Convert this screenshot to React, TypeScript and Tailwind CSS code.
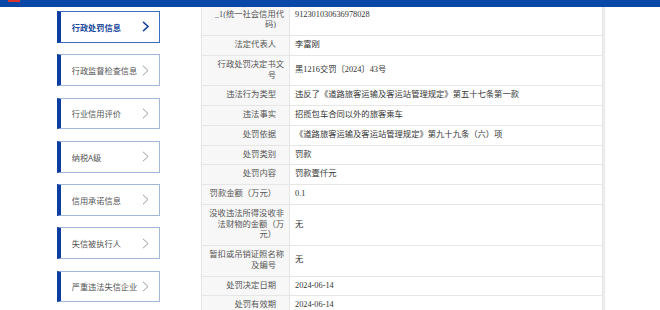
import { useState } from 'react';

/** Side menu entries */
const MENU = [
  '行政处罚信息',
  '行政监督检查信息',
  '行业信用评价',
  '纳税A级',
  '信用承诺信息',
  '失信被执行人',
  '严重违法失信企业',
];

/** Penalty detail rows: label lines (already wrapped) and value */
const ROWS: [string[], string][] = [
  [['行政相对人代码', '_1(统一社会信用代', '码)'], '912301030636978028'],
  [['法定代表人'], '李富刚'],
  [['行政处罚决定书文', '号'], '黑1216交罚〔2024〕43号'],
  [['违法行为类型'], '违反了《道路旅客运输及客运站管理规定》第五十七条第一款'],
  [['违法事实'], '招揽包车合同以外的旅客乘车'],
  [['处罚依据'], '《道路旅客运输及客运站管理规定》第九十九条（六）项'],
  [['处罚类别'], '罚款'],
  [['处罚内容'], '罚款壹仟元'],
  [['罚款金额（万元）'], '0.1'],
  [['没收违法所得没收非', '法财物的金额（万', '元）'], '无'],
  [['暂扣或吊销证照名称', '及编号'], '无'],
  [['处罚决定日期'], '2024-06-14'],
  [['处罚有效期'], '2024-06-14'],
];

function Chevron({ active }: { active: boolean }) {
  return (
    <svg width="7" height="11" viewBox="0 0 7 11" fill="none" className="shrink-0">
      <polyline
        points="1,0.8 6,5.5 1,10.2"
        stroke={active ? '#1d4a9c' : '#9a9a9a'}
        strokeWidth={active ? 1.6 : 1}
      />
    </svg>
  );
}

export default function App() {
  const [current, setCurrent] = useState(0);

  return (
    <div className="relative h-[310px] overflow-hidden bg-white font-['Noto_Sans_CJK_SC',sans-serif]">
      {/* Fixed top bar (page is scrolled under it) */}
      <header className="fixed top-0 left-0 right-0 z-10 h-[7px] bg-[#0a48a8]">
        <div className="ml-[8px] h-[2px] w-[12px] bg-[#d8342c]" />
      </header>

      <div className="flex items-start">
        {/* Side menu */}
        <nav className="ml-[56.7px] flex w-[103.3px] flex-col gap-[11.6px] pt-[11px]">
          {MENU.map((item, i) => {
            const active = i === current;
            return (
              <button
                key={item}
                onClick={() => setCurrent(i)}
                className={`flex h-[31.7px] items-center border border-l-[4px] border-l-[#0b3ea0] pl-[11px] pr-[10px] text-left text-[8.2px] ${
                  active
                    ? 'border-[#3e6cc0] font-bold text-[#1d4a9c]'
                    : 'border-[#a3b7dc] text-[#555]'
                }`}
              >
                <span className="flex-1 whitespace-nowrap">{item}</span>
                <Chevron active={active} />
              </button>
            );
          })}
        </nav>

        {/* Detail table */}
        <div className="ml-[41px] mt-[-6.25px] w-[402px] shadow-[2px_0_1px_#ececec]">
          <table className="w-full border-collapse font-['Liberation_Serif','Noto_Sans_CJK_SC',serif] text-[8.3px] leading-[10.75px]">
            <tbody>
              {ROWS.map(([lines, value]) => (
                <tr key={lines.join('')}>
                  <td className="w-[88px] whitespace-nowrap border border-[#e6e6e6] bg-[#f7f7f7] py-[4px] pl-[3px] pr-[5px] text-right text-[#555]">
                    {lines.map((line, j) => (
                      <div key={j} className={j === lines.length - 1 ? 'pr-[8px]' : ''}>
                        {line}
                      </div>
                    ))}
                  </td>
                  <td className="border border-[#e6e6e6] py-[4px] pl-[5px] pr-[6px] text-[#333]">
                    {value}
                  </td>
                </tr>
              ))}
            </tbody>
          </table>
        </div>
      </div>
    </div>
  );
}
